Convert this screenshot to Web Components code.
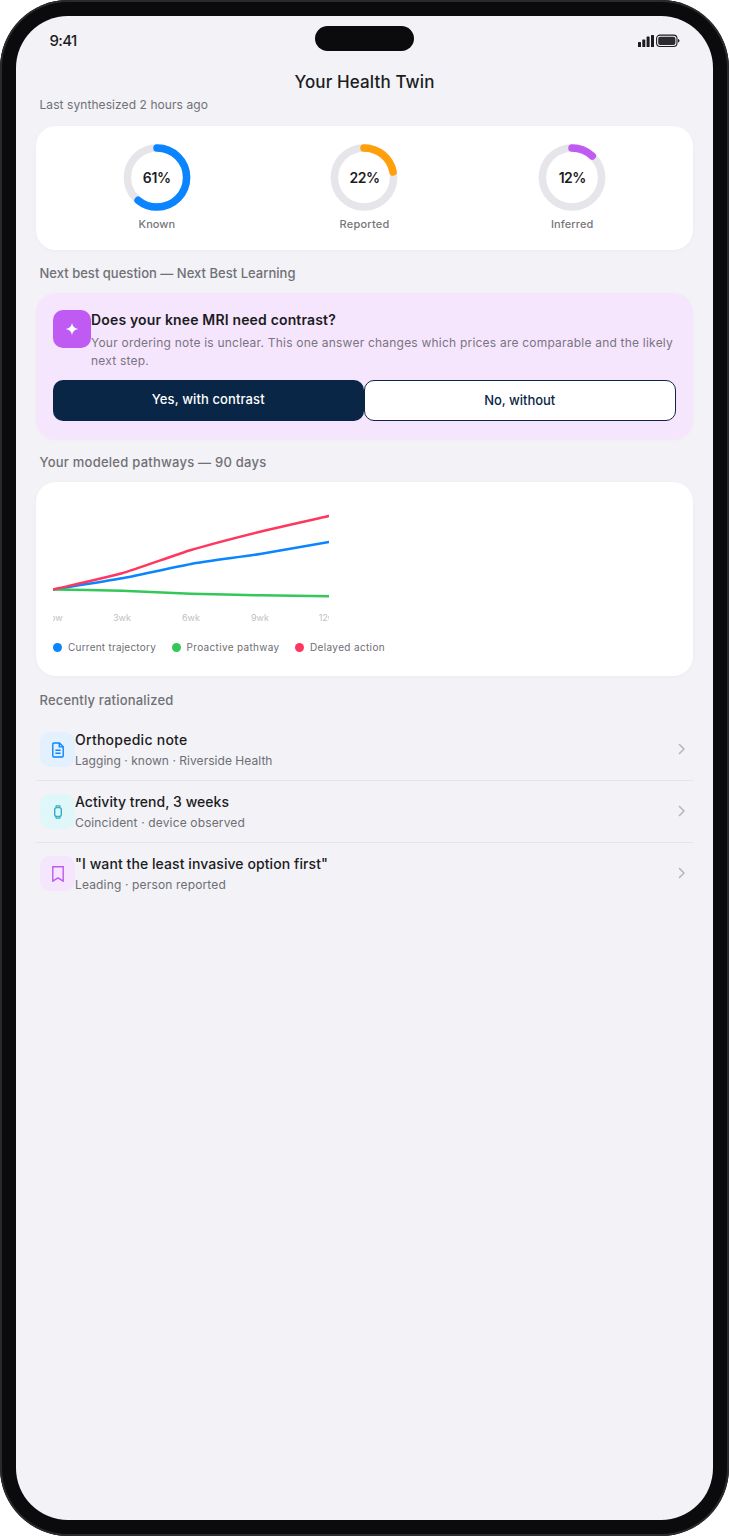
<!doctype html>
<html lang="en"><head><meta charset="utf-8"><title>Your Health Twin</title>
<style>html,body{margin:0;padding:0;background:#fff;font-family:Inter,"Liberation Sans",sans-serif}</style>
</head><body>
<phone-frame>
  <status-bar></status-bar>
  <app-header title="Your Health Twin" sub="Last synthesized 2 hours ago"></app-header>
  <content-card class="stats">
    <stat-row>
      <stat-ring value="61" color="#0a84ff" label="Known" pls="-.31" lls=".02"></stat-ring>
      <stat-ring value="22" color="#ff9f0a" label="Reported" pls="-.5" lls=".22"></stat-ring>
      <stat-ring value="12" color="#bf5af2" label="Inferred" pls="-.57" lls=".1"></stat-ring>
    </stat-row>
  </content-card>
  <section-label ls=".02" top="14" bottom="11">Next best question — Next Best Learning</section-label>
  <question-card heading="Does your knee MRI need contrast?" yes="Yes, with contrast" no="No, without">Your ordering note is unclear. This one answer changes which prices are comparable and the likely next step.</question-card>
  <section-label ls=".243" top="13" bottom="11">Your modeled pathways — 90 days</section-label>
  <content-card class="chart">
    <path-chart></path-chart>
    <chart-legend></chart-legend>
  </content-card>
  <section-label ls=".192" top="15" bottom="10">Recently rationalized</section-label>
  <list-row kind="doc" heading="Orthopedic note" tls=".256" sub="Lagging · known · Riverside Health" sls=".042"></list-row>
  <list-row kind="watch" heading="Activity trend, 3 weeks" tls=".029" sub="Coincident · device observed" sls=".153"></list-row>
  <list-row kind="mark" last heading="&quot;I want the least invasive option first&quot;" tls=".077" sub="Leading · person reported" sls=".155"></list-row>
</phone-frame>
<script>
const make=(name,cls)=>customElements.define(name,cls);
const el=(host,html)=>{host.attachShadow({mode:'open'}).innerHTML=html};

make('phone-frame',class extends HTMLElement{constructor(){super();el(this,`<style>
:host{display:block;width:729px;height:1536px;box-sizing:border-box;padding:16px;border-radius:68px;background:#0b0b0d;box-shadow:inset 0 0 0 2px #2a2a2d;color:#1c1c1e;font-family:Inter,"Liberation Sans",sans-serif}
.screen{height:1504px;border-radius:52px;background:#f2f2f7;overflow:hidden;box-sizing:border-box;padding:0 20px;display:flex;flex-direction:column}
</style><div class="screen"><slot></slot></div>`)}});

make('status-bar',class extends HTMLElement{constructor(){super();el(this,`<style>
:host{display:grid;grid-template-columns:1fr 99px 1fr;align-items:start;height:25px;margin-top:10px;padding:0 13px 0 13.5px;flex:none}
.t{font-size:15px;font-weight:500;letter-spacing:-.67px;line-height:30px;height:25px;color:#1c1c1e}
.i{width:99px;height:25px;border-radius:13px;background:#0b0b0d}
svg{justify-self:end;display:block;margin-top:8px}
</style><span class="t">9:41</span><div class="i"></div>
<svg width="42" height="14" viewBox="0 0 42 14" aria-hidden="true"><g fill="#1c1c1e"><rect x="0" y="8" width="3" height="5" rx=".6"/><rect x="4.3" y="5.5" width="3" height="7.5" rx=".6"/><rect x="8.6" y="2.5" width="3" height="10.5" rx=".6"/><rect x="13" y="1" width="3" height="12" rx=".6"/></g><rect x="18.6" y="1.1" width="20.4" height="11.4" rx="3.4" fill="none" stroke="#1c1c1e" stroke-width="1.1"/><rect x="20.2" y="2.7" width="17.2" height="8.2" rx="2" fill="#2c2c2e"/><path d="M40 5v3.6c.9-.3 1.5-1 1.5-1.8S40.900 5.300 40 5z" fill="#1c1c1e"/></svg>`)}});

make('app-header',class extends HTMLElement{constructor(){super();el(this,`<style>
:host{display:block;flex:none}
h1{margin:19px 0 0;font-size:17px;line-height:24px;font-weight:500;letter-spacing:.115px;text-align:center;color:#1c1c1e}
p{margin:2px 0 12px;padding-left:3.5px;font-size:12px;line-height:18px;letter-spacing:.076px;color:#707075}
</style><h1>${this.getAttribute('title')}</h1><p>${this.getAttribute('sub')}</p>`)}});

make('content-card',class extends HTMLElement{constructor(){super();el(this,`<style>
:host{display:block;flex:none;background:#fff;border-radius:20px;box-shadow:0 1px 4px rgba(0,0,0,.03)}
:host(.stats){padding:18px 17px}
:host(.chart){padding:17px 17px 21px;display:flex;flex-direction:column;gap:10px}
</style><slot></slot>`)}});

make('stat-row',class extends HTMLElement{constructor(){super();el(this,`<style>:host{display:grid;grid-template-columns:repeat(3,1fr)}</style><slot></slot>`)}});

make('stat-ring',class extends HTMLElement{constructor(){super();const a=k=>this.getAttribute(k),v=a('value');el(this,`<style>
:host{display:flex;flex-direction:column;align-items:center;gap:4px}
.r{position:relative;width:68px;height:68px}
svg{display:block;width:68px;height:68px}
b{position:absolute;inset:0 0 2px;display:flex;align-items:center;justify-content:center;font-size:14px;font-weight:600;color:#1c1c1e;letter-spacing:${a('pls')}px}
span{font-size:11px;font-weight:500;line-height:16px;color:#76767b;letter-spacing:${a('lls')}px}
</style><div class="r"><svg viewBox="0 0 68 68" aria-hidden="true"><circle cx="34" cy="33.5" r="29.600" fill="none" stroke="#e5e5ea" stroke-width="7.500"/><circle cx="34" cy="33.5" r="29.600" fill="none" stroke="${a('color')}" stroke-width="7.500" stroke-linecap="round" pathLength="100" stroke-dasharray="${v} 100" transform="rotate(-90 34 33.5)"/></svg><b>${v}%</b></div><span>${a('label')}</span>`)}});

make('section-label',class extends HTMLElement{constructor(){super();const a=k=>this.getAttribute(k);el(this,`<style>
:host{display:block;flex:none;margin-top:${a('top')}px;margin-bottom:${a('bottom')}px;padding-left:3.5px;font-size:13px;font-weight:500;line-height:18px;color:#707075;letter-spacing:${a('ls')}px}
</style><slot></slot>`)}});

make('question-card',class extends HTMLElement{constructor(){super();const a=k=>this.getAttribute(k);el(this,`<style>
:host{display:block;flex:none;background:#f5e6fd;border-radius:20px;padding:17px 17px 19px;box-shadow:0 1px 4px rgba(0,0,0,.02)}
.top{display:flex;align-items:flex-start}
.ic{flex:none;width:38px;height:38px;border-radius:10px;background:#bf5af2;display:flex;align-items:center;justify-content:center}
h2{margin:0;font-size:14px;line-height:20px;font-weight:600;letter-spacing:.162px;color:#1c1c1e}
p{margin:4px 0 0;font-size:12px;line-height:18px;letter-spacing:.213px;color:#7a7480}
.btns{display:flex;margin-top:10px}
button{flex:1 1 0;margin:0;font:inherit;font-size:13px;font-weight:500;line-height:18px;border-radius:10px;cursor:pointer;box-sizing:border-box}
.y{background:#0a2647;color:#fff;border:0;padding:10px 0 13px;letter-spacing:.112px}
.n{background:#fff;color:#0a2647;border:1px solid #0a2647;padding:10px 0 11px;letter-spacing:-.034px}
</style><div class="top"><div class="ic"><svg width="14" height="14" viewBox="0 0 14 14" aria-hidden="true"><path d="M7 .8c.5 3.700 2.500 5.700 6.200 6.200-3.700.5-5.700 2.500-6.200 6.200-.5-3.700-2.500-5.700-6.200-6.200C4.500 6.500 6.500 4.500 7 .8z" fill="#fff"/></svg></div><div><h2>${a('heading')}</h2><p><slot></slot></p></div></div>
<div class="btns"><button class="y">${a('yes')}</button><button class="n">${a('no')}</button></div>`)}});

make('path-chart',class extends HTMLElement{constructor(){super();
const curve=p=>{const P=p.map(s=>s.split(',').map(Number));let d=`M${P[0][0]} ${P[0][1]}`;for(let i=1;i<P.length;i++){const a=P[i-1],b=P[i],c=(b[0]-a[0])*.18;const m=(b[1]-a[1])/(b[0]-a[0]);const s0=i>1?(m+(a[1]-P[i-2][1])/(a[0]-P[i-2][0]))/2:m;const n=P[i+1];const s1=n?(m+(n[1]-b[1])/(n[0]-b[0]))/2:m;d+=` C${a[0]+c} ${(a[1]+s0*c).toFixed(1)} ${b[0]-c} ${(b[1]-s1*c).toFixed(1)} ${b[0]} ${b[1]}`}return d};
const line=(pts,col)=>`<path d="${curve(pts)}" fill="none" stroke="${col}" stroke-width="2.500" stroke-linecap="round" stroke-linejoin="round"/>`;
const labels=[['Now',0,.1],['3wk',69,.1],['6wk',138,.1],['9wk',207,.1],['12wk',276,-.3]].map(([t,x,l])=>`<text x="${x}" y="122" text-anchor="middle" style="letter-spacing:${l}px">${t}</text>`).join('');
el(this,`<style>
:host{display:block;width:276px;height:130px}
svg{display:block;overflow:hidden}
text{font-family:Inter,"Liberation Sans",sans-serif;font-size:9px;fill:#c0c0c6}
</style><svg width="276" height="130" viewBox="0 0 276 130" role="img" aria-label="Modeled pathways chart">${line(['0,90.5','69,79.3','138,65','207,55','276,43'],'#0a84ff')}${line(['0,90.5','69,91.7','138,94.7','207,96.3','276,97.3'],'#34c759')}${line(['0,90.5','69,74.3','138,51','207,32.7','276,17'],'#ff375f')}${labels}</svg>`)}});

make('chart-legend',class extends HTMLElement{constructor(){super();
const it=[['#0a84ff','Current trajectory',.228],['#34c759','Proactive pathway',.325],['#ff375f','Delayed action',.353]];
el(this,`<style>
:host{display:flex;gap:15.5px;height:16px;align-items:center}
div{display:flex;align-items:center;gap:6px;font-size:10px;line-height:16px;color:#6e6e73;white-space:nowrap}
i{width:9px;height:9px;border-radius:50%}
</style>`+it.map(([c,t,l])=>`<div><i style="background:${c}"></i><span style="letter-spacing:${l}px">${t}</span></div>`).join(''))}});

make('list-row',class extends HTMLElement{constructor(){super();const a=k=>this.getAttribute(k),last=this.hasAttribute('last');
const kinds={
doc:['#e3f1ff','#0a84ff','<path d="M3.800 1h5.700l3.700 3.700v9.300a1 1 0 0 1-1 1H3.800a1 1 0 0 1-1-1V2a1 1 0 0 1 1-1z"/><path d="M9.300 1.100v3.800h3.800M5.400 8.200h5.200M5.400 11.200h5.200"/>'],
watch:['#e0f7f9','#30b0c7','<rect x="4.700" y="3.600" width="6.600" height="8.800" rx="2"/><path d="M6 3.400l.3-1.500h3.400l.3 1.500M6 12.600l.3 1.500h3.400l.3-1.500"/>'],
mark:['#f5e6fd','#bf5af2','<path d="M2.800 .8h10.400v14.400l-5.200-3.400-5.200 3.400z" stroke-linejoin="miter"/>']};
const [bg,col,ic]=kinds[a('kind')];
el(this,`<style>
:host{display:flex;align-items:center;flex:none;padding:10px 7px 9px 4px;${last?'':'border-bottom:1px solid #e5e5ea'}}
.ic{flex:none;width:35px;height:35px;margin-bottom:1px;border-radius:10px;background:${bg};display:flex;align-items:center;justify-content:center}
svg.g{display:block;fill:none;stroke:${col};stroke-width:1.400}
.tx{flex:1;min-width:0}
h3{margin:0;font-size:14px;line-height:22px;font-weight:500;color:#1c1c1e;letter-spacing:${a('tls')}px;white-space:nowrap}
p{margin:0;font-size:12px;line-height:20px;color:#6e6e73;letter-spacing:${a('sls')}px;white-space:nowrap}
.ch{display:block;flex:none;margin-bottom:2px}
</style><div class="ic"><svg class="g" width="16" height="16" viewBox="0 0 16 16" aria-hidden="true">${ic}</svg></div><div class="tx"><h3>${a('heading')}</h3><p>${a('sub')}</p></div><svg class="ch" width="8" height="12" viewBox="0 0 8 12" aria-hidden="true"><path d="M1.500 1.500L6 6l-4.500 4.500" fill="none" stroke="#b4b4ba" stroke-width="1.500" stroke-linecap="round" stroke-linejoin="round"/></svg>`)}});
</script>
</body></html>
